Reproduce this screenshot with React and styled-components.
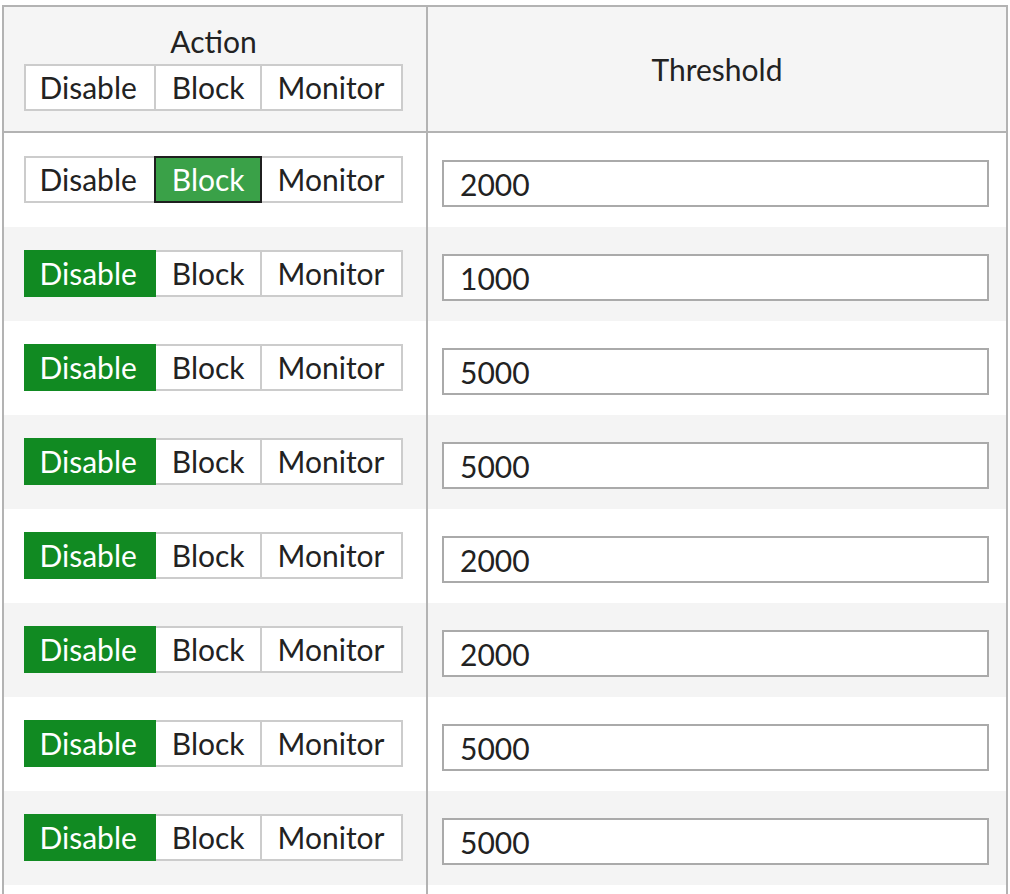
import React from 'react';
import styled, { createGlobalStyle } from 'styled-components';

const GlobalStyle = createGlobalStyle`
  body {
    margin: 0;
    background: #ffffff;
    font-family: Lato, "Open Sans", sans-serif;
    color: #222;
  }
`;

const Page = styled.div`
  padding: 5px 2px 0 2px;
`;

const Table = styled.div`
  border: 2px solid #b3b3b3;
  border-bottom: none;
`;

const Row = styled.div`
  display: grid;
  grid-template-columns: 424px 1fr;
  height: ${(p) => p.$height || 94}px;
  background: ${(p) => (p.$striped ? '#f4f4f4' : '#ffffff')};
`;

const HeaderRow = styled(Row)`
  background: #f5f5f5;
  border-bottom: 2px solid #b3b3b3;
`;

const ActionCell = styled.div`
  border-right: 2px solid #b3b3b3;
  display: flex;
  flex-direction: column;
  align-items: center;
  padding-top: ${(p) => p.$top ?? 23}px;
  padding-right: 3px;
`;

const ThresholdCell = styled.div`
  padding: 27px 17px 0 14px;
`;

const HeaderTitle = styled.div`
  font-size: 30px;
  line-height: 36px;
  text-align: center;
`;

const HeaderThreshold = styled.div`
  font-size: 30px;
  line-height: 36px;
  text-align: center;
  padding-top: 44px;
`;

const Group = styled.div`
  display: flex;
  margin-top: ${(p) => p.$mt || 0}px;
`;

// padding per option: [left, right]
const PADS = { Disable: [13, 17], Block: [16, 15], Monitor: [16, 16] };

const SegButton = styled.div`
  box-sizing: border-box;
  height: 47px;
  padding: 0 ${(p) => p.$pad[1]}px 0 ${(p) => p.$pad[0]}px;
  margin-left: ${(p) => (p.$first ? 0 : -2)}px;
  border: 2px solid #cccccc;
  background: #ffffff;
  font-size: 30px;
  line-height: 42px;
  color: #222;
  position: relative;

  ${(p) =>
    p.$active &&
    `
    background: #118a22;
    border-color: #118a22;
    color: #ffffff;
    z-index: 1;
  `}

  ${(p) =>
    p.$focused &&
    `
    background: #3aa148;
    border-color: #1f1f1f;
    color: #ffffff;
    z-index: 2;
  `}
`;

const Input = styled.div`
  box-sizing: border-box;
  height: 47px;
  border: 2px solid #aaaaaa;
  background: #ffffff;
  padding-left: 16px;
  font-size: 30px;
  line-height: 45px;
  color: #222;
`;

const OPTIONS = ['Disable', 'Block', 'Monitor'];

const rows = [
  { action: 'Block', focused: true, value: '2000' },
  { action: 'Disable', value: '1000' },
  { action: 'Disable', value: '5000' },
  { action: 'Disable', value: '5000' },
  { action: 'Disable', value: '2000' },
  { action: 'Disable', value: '2000' },
  { action: 'Disable', value: '5000' },
  { action: 'Disable', value: '5000' },
];

const ActionGroup = ({ selected, focused, mt }) => (
  <Group $mt={mt}>
    {OPTIONS.map((opt, i) => (
      <SegButton
        key={opt}
        $first={i === 0}
        $pad={PADS[opt]}
        $active={!focused && selected === opt}
        $focused={focused && selected === opt}
      >
        {opt}
      </SegButton>
    ))}
  </Group>
);

export default function App() {
  return (
    <Page>
      <GlobalStyle />
      <Table>
        <HeaderRow $height={124}>
          <ActionCell $top={16}>
            <HeaderTitle>Action</HeaderTitle>
            <ActionGroup mt={5} />
          </ActionCell>
          <HeaderThreshold>Threshold</HeaderThreshold>
        </HeaderRow>
        {rows.map((r, i) => (
          <Row key={i} $striped={i % 2 === 1}>
            <ActionCell>
              <ActionGroup selected={r.action} focused={r.focused} />
            </ActionCell>
            <ThresholdCell>
              <Input>{r.value}</Input>
            </ThresholdCell>
          </Row>
        ))}
        <Row>
          <ActionCell />
          <ThresholdCell />
        </Row>
      </Table>
    </Page>
  );
}
